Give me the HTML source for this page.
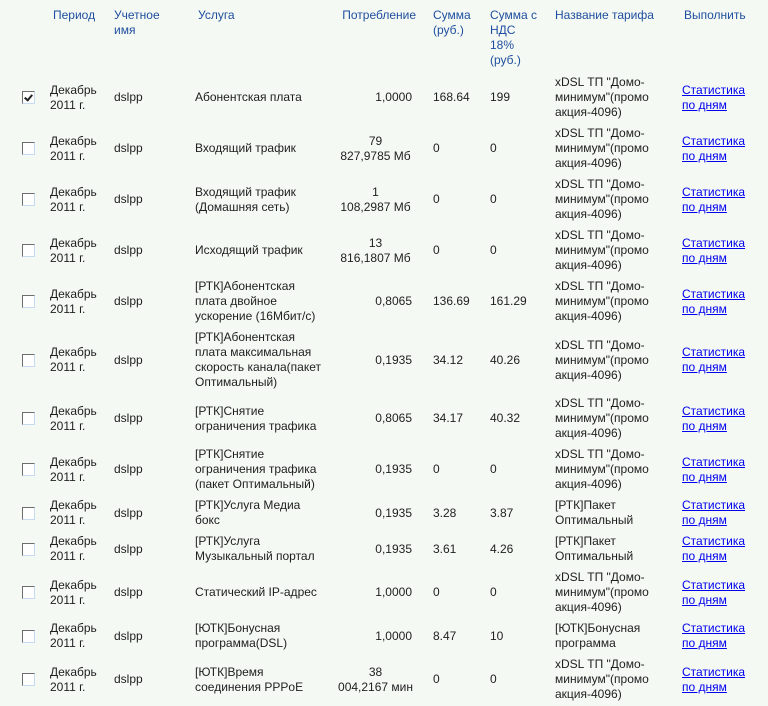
<!DOCTYPE html>
<html><head><meta charset="utf-8"><style>
body{margin:0;background:#f4f9f4;font-family:"Liberation Sans",Arial,sans-serif;font-size:12px;color:#1e1e1e;width:768px;height:706px;overflow:hidden}
table{border-collapse:collapse;table-layout:fixed;width:768px}
td,th{padding:3px 0 3px 3px;line-height:15px;vertical-align:middle;text-align:left;font-weight:normal;white-space:nowrap}
th{color:#1f4e9e;vertical-align:top;padding-top:8px;height:61px}
a{color:#0000ee;text-decoration:underline}
.cb{display:block;width:11px;height:11px;margin-left:19px;border-top:1px solid #6e6e6e;border-left:1px solid #6e6e6e;border-right:1px solid #c8daf0;border-bottom:1px solid #c8daf0;background:#fff;position:relative}
.ck:after{content:"";position:absolute;left:3px;top:1px;width:3px;height:6px;border-right:2px solid #222;border-bottom:2px solid #222;transform:rotate(40deg)}
.r{text-align:right;padding-right:18px}
.c{text-align:center;padding-right:14px}
</style></head><body>
<table>
<colgroup><col style="width:47px"><col style="width:64px"><col style="width:81px"><col style="width:140px"><col style="width:98px"><col style="width:57px"><col style="width:65px"><col style="width:127px"><col style="width:89px"></colgroup>
<tr><th></th><th style="padding-left:6px">Период</th><th>Учетное<br>имя</th><th style="padding-left:6px">Услуга</th><th class="r" style="padding-right:14px">Потребление</th><th>Сумма<br>(руб.)</th><th>Сумма с<br>НДС<br>18%<br>(руб.)</th><th>Название тарифа</th><th style="padding-left:5px">Выполнить</th></tr>
<tr><td><span class="cb ck"></span></td><td>Декабрь<br>2011 г.</td><td>dslpp</td><td>Абонентская плата</td><td class="r">1,0000</td><td>168.64</td><td>199</td><td>xDSL ТП "Домо-<br>минимум"(промо<br>акция-4096)</td><td><a>Статистика<br>по дням</a></td></tr>
<tr><td><span class="cb"></span></td><td>Декабрь<br>2011 г.</td><td>dslpp</td><td>Входящий трафик</td><td class="c">79<br>827,9785 Мб</td><td>0</td><td>0</td><td>xDSL ТП "Домо-<br>минимум"(промо<br>акция-4096)</td><td><a>Статистика<br>по дням</a></td></tr>
<tr><td><span class="cb"></span></td><td>Декабрь<br>2011 г.</td><td>dslpp</td><td>Входящий трафик<br>(Домашняя сеть)</td><td class="c">1<br>108,2987 Мб</td><td>0</td><td>0</td><td>xDSL ТП "Домо-<br>минимум"(промо<br>акция-4096)</td><td><a>Статистика<br>по дням</a></td></tr>
<tr><td><span class="cb"></span></td><td>Декабрь<br>2011 г.</td><td>dslpp</td><td>Исходящий трафик</td><td class="c">13<br>816,1807 Мб</td><td>0</td><td>0</td><td>xDSL ТП "Домо-<br>минимум"(промо<br>акция-4096)</td><td><a>Статистика<br>по дням</a></td></tr>
<tr><td><span class="cb"></span></td><td>Декабрь<br>2011 г.</td><td>dslpp</td><td>[РТК]Абонентская<br>плата двойное<br>ускорение (16Мбит/с)</td><td class="r">0,8065</td><td>136.69</td><td>161.29</td><td>xDSL ТП "Домо-<br>минимум"(промо<br>акция-4096)</td><td><a>Статистика<br>по дням</a></td></tr>
<tr><td><span class="cb"></span></td><td>Декабрь<br>2011 г.</td><td>dslpp</td><td>[РТК]Абонентская<br>плата максимальная<br>скорость канала(пакет<br>Оптимальный)</td><td class="r">0,1935</td><td>34.12</td><td>40.26</td><td>xDSL ТП "Домо-<br>минимум"(промо<br>акция-4096)</td><td><a>Статистика<br>по дням</a></td></tr>
<tr><td><span class="cb"></span></td><td>Декабрь<br>2011 г.</td><td>dslpp</td><td>[РТК]Снятие<br>ограничения трафика</td><td class="r">0,8065</td><td>34.17</td><td>40.32</td><td>xDSL ТП "Домо-<br>минимум"(промо<br>акция-4096)</td><td><a>Статистика<br>по дням</a></td></tr>
<tr><td><span class="cb"></span></td><td>Декабрь<br>2011 г.</td><td>dslpp</td><td>[РТК]Снятие<br>ограничения трафика<br>(пакет Оптимальный)</td><td class="r">0,1935</td><td>0</td><td>0</td><td>xDSL ТП "Домо-<br>минимум"(промо<br>акция-4096)</td><td><a>Статистика<br>по дням</a></td></tr>
<tr><td><span class="cb"></span></td><td>Декабрь<br>2011 г.</td><td>dslpp</td><td>[РТК]Услуга Медиа<br>бокс</td><td class="r">0,1935</td><td>3.28</td><td>3.87</td><td>[РТК]Пакет<br>Оптимальный</td><td><a>Статистика<br>по дням</a></td></tr>
<tr><td><span class="cb"></span></td><td>Декабрь<br>2011 г.</td><td>dslpp</td><td>[РТК]Услуга<br>Музыкальный портал</td><td class="r">0,1935</td><td>3.61</td><td>4.26</td><td>[РТК]Пакет<br>Оптимальный</td><td><a>Статистика<br>по дням</a></td></tr>
<tr><td><span class="cb"></span></td><td>Декабрь<br>2011 г.</td><td>dslpp</td><td>Статический IP-адрес</td><td class="r">1,0000</td><td>0</td><td>0</td><td>xDSL ТП "Домо-<br>минимум"(промо<br>акция-4096)</td><td><a>Статистика<br>по дням</a></td></tr>
<tr><td><span class="cb"></span></td><td>Декабрь<br>2011 г.</td><td>dslpp</td><td>[ЮТК]Бонусная<br>программа(DSL)</td><td class="r">1,0000</td><td>8.47</td><td>10</td><td>[ЮТК]Бонусная<br>программа</td><td><a>Статистика<br>по дням</a></td></tr>
<tr><td><span class="cb"></span></td><td>Декабрь<br>2011 г.</td><td>dslpp</td><td>[ЮТК]Время<br>соединения PPPoE</td><td class="c">38<br>004,2167 мин</td><td>0</td><td>0</td><td>xDSL ТП "Домо-<br>минимум"(промо<br>акция-4096)</td><td><a>Статистика<br>по дням</a></td></tr>
</table>
</body></html>
